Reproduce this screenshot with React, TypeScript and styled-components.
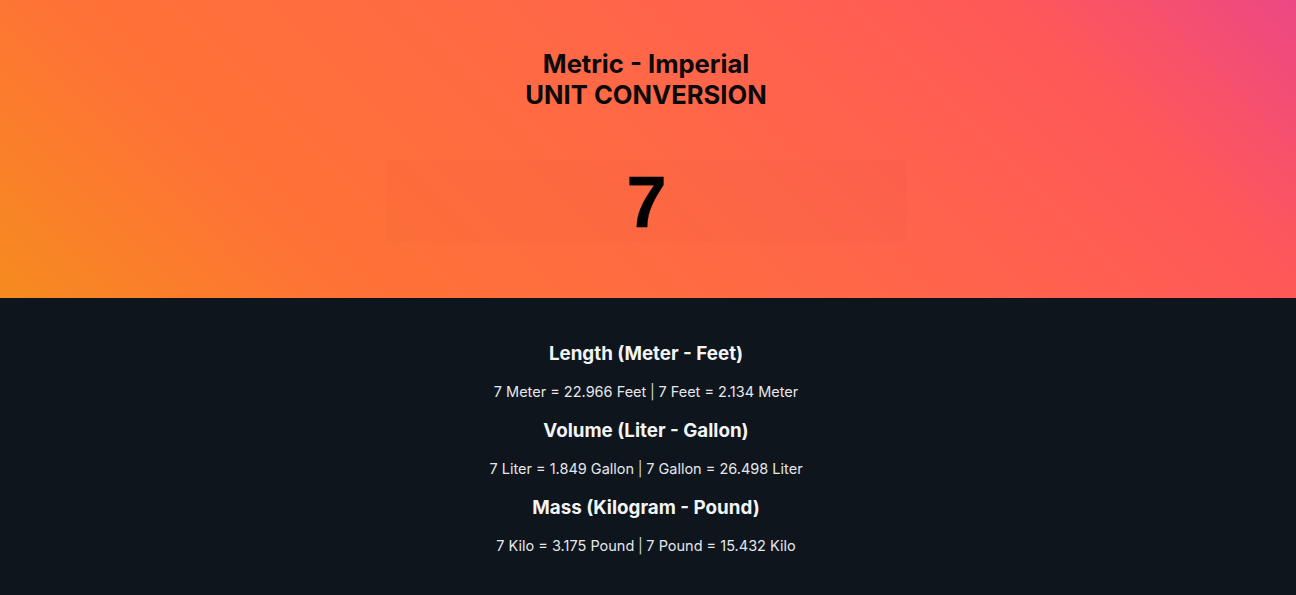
import styled, { createGlobalStyle } from "styled-components";

const GlobalStyle = createGlobalStyle`
  body {
    margin: 0;
    font-family: Inter, "Noto Sans", sans-serif;
    background-color: #0e151d;
  }
`;

const Hero = styled.header`
  display: flex;
  flex-direction: column;
  align-items: center;
  height: 298px;
  box-sizing: border-box;
  padding-top: 48px;
  background: linear-gradient(
    45deg,
    #f68b1f 0%,
    #ff7236 22%,
    #ff6748 55%,
    #ff5858 82%,
    #ec4884 100%
  );
`;

const Title = styled.h1`
  margin: 0 4px 0 0;
  font-size: 25.6px;
  line-height: 31px;
  font-weight: 700;
  text-align: center;
  color: #0a0a0a;
`;

const ValueInput = styled.input`
  margin-top: 50px;
  margin-right: 3px;
  width: 521px;
  height: 83px;
  box-sizing: border-box;
  border: none;
  border-radius: 5px;
  outline: none;
  background-color: rgba(0, 0, 0, 0.012);
  font-family: "Liberation Sans", Arial, sans-serif;
  font-size: 72px;
  font-weight: 700;
  -webkit-text-stroke: 0.4px #000;
  text-align: center;
  color: #000000;
  appearance: textfield;

  &::-webkit-outer-spin-button,
  &::-webkit-inner-spin-button {
    -webkit-appearance: none;
    margin: 0;
  }
`;

const Results = styled.main`
  display: flex;
  flex-direction: column;
  align-items: center;
  padding: 42px 4px 0 0;
  color: #f3f4f6;
`;

const Group = styled.section`
  text-align: center;
`;

const Heading = styled.h2`
  margin: 0;
  font-size: 18.8px;
  line-height: 27px;
  font-weight: 700;
`;

const Line = styled.p`
  margin: 13px 0 13px;
  font-size: 14.5px;
  line-height: 24px;
  color: #e5e7eb;
`;

const Part = styled.span``;

const Divider = styled.span`
  margin: 0 0.25em;
  color: #d1d5db;
`;

const groups = [
  {
    title: "Length (Meter - Feet)",
    left: "7 Meter = 22.966 Feet",
    right: "7 Feet = 2.134 Meter",
  },
  {
    title: "Volume (Liter - Gallon)",
    left: "7 Liter = 1.849 Gallon",
    right: "7 Gallon = 26.498 Liter",
  },
  {
    title: "Mass (Kilogram - Pound)",
    left: "7 Kilo = 3.175 Pound",
    right: "7 Pound = 15.432 Kilo",
  },
];

export default function App() {
  return (
    <>
      <GlobalStyle />
      <Hero>
        <Title>
          Metric - Imperial
          <br />
          UNIT CONVERSION
        </Title>
        <ValueInput type="number" defaultValue={7} />
      </Hero>
      <Results>
        {groups.map((g) => (
          <Group key={g.title}>
            <Heading>{g.title}</Heading>
            <Line>
              <Part>{g.left}</Part>
              <Divider>|</Divider>
              <Part>{g.right}</Part>
            </Line>
          </Group>
        ))}
      </Results>
    </>
  );
}
